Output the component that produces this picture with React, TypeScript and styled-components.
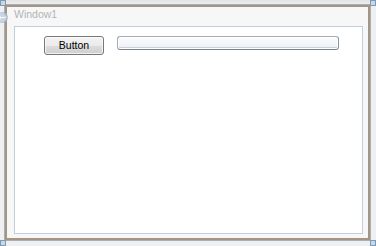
import React from 'react';
import styled, { createGlobalStyle } from 'styled-components';

const GlobalStyle = createGlobalStyle`
    html, body {
        margin: 0;
        padding: 0;
        background: #efefef;
        font-family: "Liberation Sans", Arial, sans-serif;
    }
`;

type Corner = 'tl' | 'tr' | 'bl' | 'br';

const Canvas = styled.div`
    position: relative;
    width: 376px;
    height: 246px;
    box-sizing: border-box;
    padding: 5px;
    background: linear-gradient(#e4e4e4, #f0f0f0 5px);
`;

const Handle = styled.div<{ $corner: Corner }>`
    position: absolute;
    width: 6px;
    height: 6px;
    box-sizing: border-box;
    background: #c9d8e7;
    border: 1px solid #7c99b6;
    left: ${(p) => (p.$corner === 'tl' || p.$corner === 'bl' ? '0' : '370px')};
    top: ${(p) => (p.$corner === 'tl' || p.$corner === 'tr' ? '0' : '240px')};
`;

const MoveGrip = styled.svg`
    position: absolute;
    left: -3px;
    top: 12px;
    opacity: 0.8;
`;

const Window = styled.div`
    width: 365px;
    height: 235px;
    box-sizing: border-box;
    border: 2px solid #a69580;
    outline: 1px solid #a3b0bd;
    background: #f7f7f7;
    display: flex;
    flex-direction: column;
`;

const TitleBar = styled.div`
    height: 19px;
    box-sizing: border-box;
    padding: 1px 0 0 7px;
    font-size: 10.5px;
    line-height: 12px;
    color: #b4b4b4;
`;

const Panel = styled.div`
    flex: 1;
    margin: 0 5px 4px 7px;
    background: #ffffff;
    border: 1px solid #c1cfdc;
`;

const Row = styled.div`
    display: flex;
    align-items: flex-start;
    gap: 13px;
    padding: 9px 0 0 29px;
`;

const AeroButton = styled.div`
    width: 60px;
    height: 19px;
    box-sizing: border-box;
    border: 1px solid #777777;
    border-radius: 3px;
    background: linear-gradient(#f3f3f3 0%, #ebebeb 50%, #dddddd 51%, #cfcfcf 100%);
    box-shadow: inset 0 0 0 1px rgba(255, 255, 255, 0.7);
    font-size: 10.5px;
    line-height: 16px;
    text-align: center;
    color: #000000;
`;

const ProgressTrack = styled.div`
    width: 222px;
    height: 14px;
    box-sizing: border-box;
    border: 1px solid #a2acb7;
    border-bottom-color: #76838f;
    border-right-color: #8895a2;
    border-radius: 3px;
    background: linear-gradient(#fbfcfd, #edf0f3);
    box-shadow: inset 0 0 0 1px #ffffff, inset 0 -1px 0 1px #c9d1da;
`;

export default function App() {
    return (
        <>
            <GlobalStyle />
            <Canvas>
                <Window>
                    <TitleBar>Window1</TitleBar>
                    <Panel>
                        <Row>
                            <AeroButton>Button</AeroButton>
                            <ProgressTrack />
                        </Row>
                    </Panel>
                </Window>
                <MoveGrip width="11" height="11" viewBox="0 0 11 11">
                    <circle cx="5.5" cy="5.5" r="5" fill="#bdcfe2" stroke="#a3b9d0" />
                    <path d="M2 5.5h7M2 5.5l1.7-1.7M2 5.5l1.7 1.7M9 5.5L7.3 3.8M9 5.5L7.3 7.2" stroke="#ffffff" strokeWidth="1" fill="none" />
                </MoveGrip>
                <Handle $corner="tl" />
                <Handle $corner="tr" />
                <Handle $corner="bl" />
                <Handle $corner="br" />
            </Canvas>
        </>
    );
}
